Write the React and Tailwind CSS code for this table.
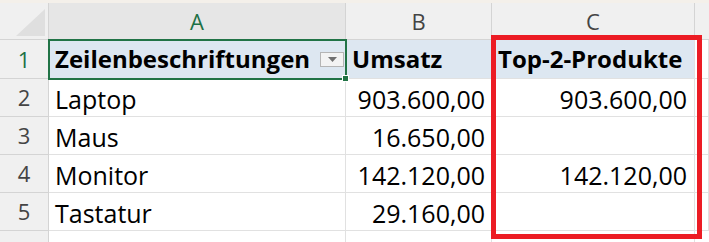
import React from 'react';

const rows = [
  { n: 2, label: 'Laptop', umsatz: '903.600,00', top: '903.600,00' },
  { n: 3, label: 'Maus', umsatz: '16.650,00', top: '' },
  { n: 4, label: 'Monitor', umsatz: '142.120,00', top: '142.120,00' },
  { n: 5, label: 'Tastatur', umsatz: '29.160,00', top: '' },
];

const grid = 'border-r border-b border-[#e1e1e1]';
const rowHead = 'flex items-center justify-center bg-[#f0f0f0] border-r border-b border-[#d4d4d4] text-[22px] text-[#444]';

const App = () => {
  return (
    <div className="relative w-[709px] h-[242px] overflow-hidden bg-white font-['Open_Sans',sans-serif] text-black">
      <div className="h-[3px] bg-[#f4f0ea]" />

      <div className="grid grid-cols-[49px_297px_146px_203px_14px] grid-rows-[37px_39px_38px_38px_38px_38px_11px]">
        {/* column headers */}
        <div className="relative bg-[#f0f0f0] border-r border-b border-[#d4d4d4]">
          <svg className="absolute left-0 top-0" width="49" height="37" viewBox="0 0 49 37">
            <polygon points="16,33 45,6 45,33" fill="#dfdfdf" />
          </svg>
        </div>
        <div className="flex items-center justify-center bg-[#e6e6e6] border-r border-b border-[#d4d4d4] text-[22px] text-[#1e7145]">A</div>
        <div className="flex items-center justify-center bg-[#f0f0f0] border-r border-b border-[#d4d4d4] text-[22px] text-[#444]">B</div>
        <div className="flex items-center justify-center bg-[#f0f0f0] border-r border-b border-[#d4d4d4] text-[22px] text-[#444]">C</div>
        <div className="bg-[#f0f0f0] border-b border-[#d4d4d4]" />

        {/* row 1 */}
        <div className={`${rowHead} !text-[#1e7145] bg-[#e6e6e6]`}>1</div>
        <div className={`${grid} relative flex items-end pl-[6px] pb-[3px] bg-[#dde7f1] font-bold text-[24px] leading-[32px]`}>
          Zeilenbeschriftungen
          <div className="absolute right-[1px] top-[12px] w-[24px] h-[15px] flex items-center justify-center bg-[#f3f3f3] border border-[#b5b5b5]">
            <svg width="9" height="5" viewBox="0 0 9 5">
              <polygon points="0,0 9,0 4.5,5" fill="#707070" />
            </svg>
          </div>
        </div>
        <div className={`${grid} flex items-end pl-[6px] pb-[3px] bg-[#dde7f1] font-bold text-[24px] leading-[32px]`}>Umsatz</div>
        <div className={`${grid} flex items-end pl-[6px] pb-[3px] bg-[#dde7f1] font-bold text-[24px] leading-[32px]`}>Top-2-Produkte</div>
        <div className={grid} />

        {rows.map((r) => (
          <React.Fragment key={r.n}>
            <div className={rowHead}>{r.n}</div>
            <div className={`${grid} flex items-end pl-[6px] pb-[1px] text-[25px] leading-[32px]`}>{r.label}</div>
            <div className={`${grid} flex items-end justify-end pr-[6px] pb-[1px] text-[25px] leading-[32px]`}>{r.umsatz}</div>
            <div className={`${grid} flex items-end justify-end pr-[7px] pb-[1px] text-[25px] leading-[32px]`}>{r.top}</div>
            <div className={grid} />
          </React.Fragment>
        ))}

        {/* row 6 partial */}
        <div className="bg-[#f0f0f0] border-r border-[#d4d4d4]" />
        <div className="border-r border-[#e1e1e1]" />
        <div className="border-r border-[#e1e1e1]" />
        <div className="border-r border-[#e1e1e1]" />
        <div />
      </div>

      {/* selection on A1 */}
      <div className="absolute left-[48px] top-[39px] w-[299px] h-[41px] border-2 border-[#217346]" />
      <div className="absolute left-[342px] top-[75px] w-[7px] h-[7px] bg-[#217346] border border-white" />

      {/* red highlight */}
      <div className="absolute left-[491px] top-[35px] w-[211px] h-[204px] border-[5px] border-[#ec1c24]" />
    </div>
  );
};

export default App;
